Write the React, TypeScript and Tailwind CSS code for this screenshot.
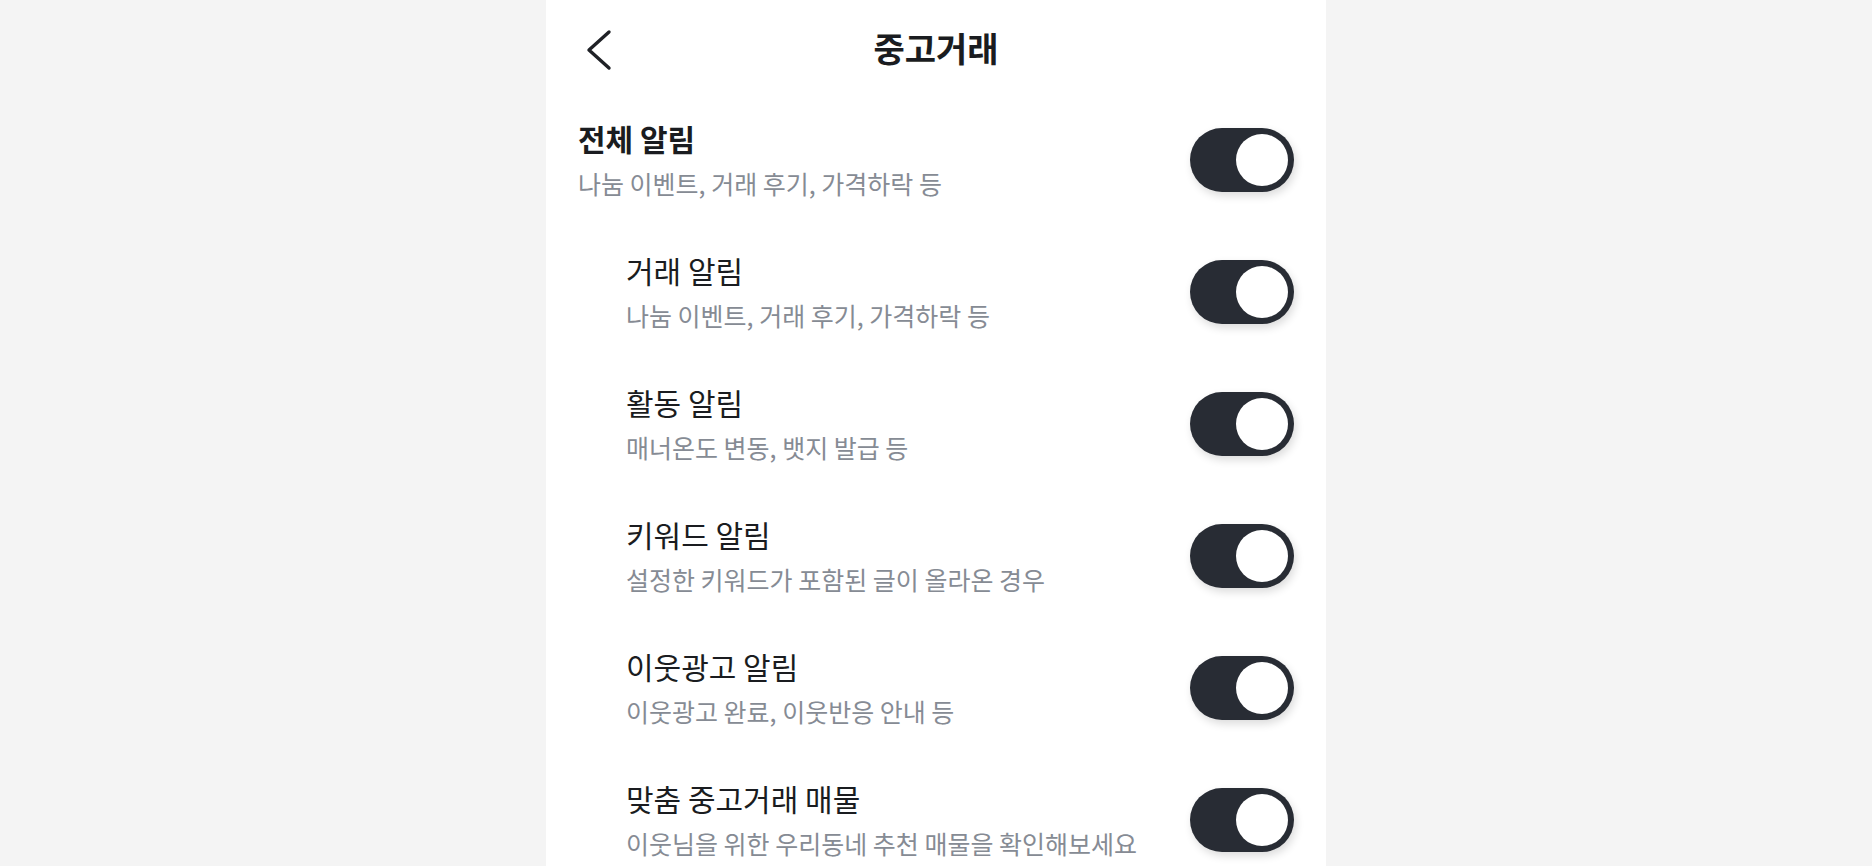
import React from "react";

type Item = { label: string; desc: string; main?: boolean };

const items: Item[] = [
  { label: "전체 알림", desc: "나눔 이벤트, 거래 후기, 가격하락 등", main: true },
  { label: "거래 알림", desc: "나눔 이벤트, 거래 후기, 가격하락 등" },
  { label: "활동 알림", desc: "매너온도 변동, 뱃지 발급 등" },
  { label: "키워드 알림", desc: "설정한 키워드가 포함된 글이 올라온 경우" },
  { label: "이웃광고 알림", desc: "이웃광고 완료, 이웃반응 안내 등" },
  { label: "맞춤 중고거래 매물", desc: "이웃님을 위한 우리동네 추천 매물을 확인해보세요" },
];

function Toggle() {
  return (
    <div className="flex h-[64px] w-[104px] shrink-0 items-center justify-end rounded-full bg-[#282c34] px-[6px] shadow-[2px_4px_8px_rgba(0,0,0,0.14)]">
      <div className="h-[52px] w-[52px] rounded-full bg-white" />
    </div>
  );
}

export default function App() {
  return (
    <div
      className="flex h-[866px] w-full justify-center overflow-hidden bg-[#f4f4f4]"
      style={{ fontFamily: '"Noto Sans CJK KR", "Noto Sans", sans-serif' }}
    >
      <div className="flex w-[780px] flex-col bg-white">
        <header className="relative flex h-[94px] shrink-0 items-start justify-center pt-[4px]">
          <div className="flex h-[88px] w-full items-center justify-center">
            <span className="text-[34px] font-bold leading-none text-[#1a1c20]">
              중고거래
            </span>
          </div>
          <button className="absolute left-[38px] top-[28px] flex h-[44px] w-[32px] items-center justify-center">
            <svg width="30" height="44" viewBox="0 0 30 44" fill="none">
              <path
                d="M24 4 L4 22 L24 40"
                stroke="#1f2126"
                strokeWidth="3.4"
                strokeLinecap="round"
                strokeLinejoin="round"
              />
            </svg>
          </button>
        </header>
        <ul className="flex shrink-0 flex-col">
          {items.map((it) => (
            <li
              key={it.label}
              className={`flex h-[132px] shrink-0 items-center justify-between pr-[32px] ${
                it.main ? "pl-[32px]" : "pl-[80px]"
              }`}
            >
              <div className="flex flex-col pb-[4px]">
                <span
                  className={`text-[30px] leading-[40px] text-[#1a1c20] ${
                    it.main ? "font-bold" : "font-normal"
                  }`}
                >
                  {it.label}
                </span>
                <span className="mt-[9px] text-[25px] leading-[32px] text-[#868b94]">
                  {it.desc}
                </span>
              </div>
              <Toggle />
            </li>
          ))}
        </ul>
      </div>
    </div>
  );
}
